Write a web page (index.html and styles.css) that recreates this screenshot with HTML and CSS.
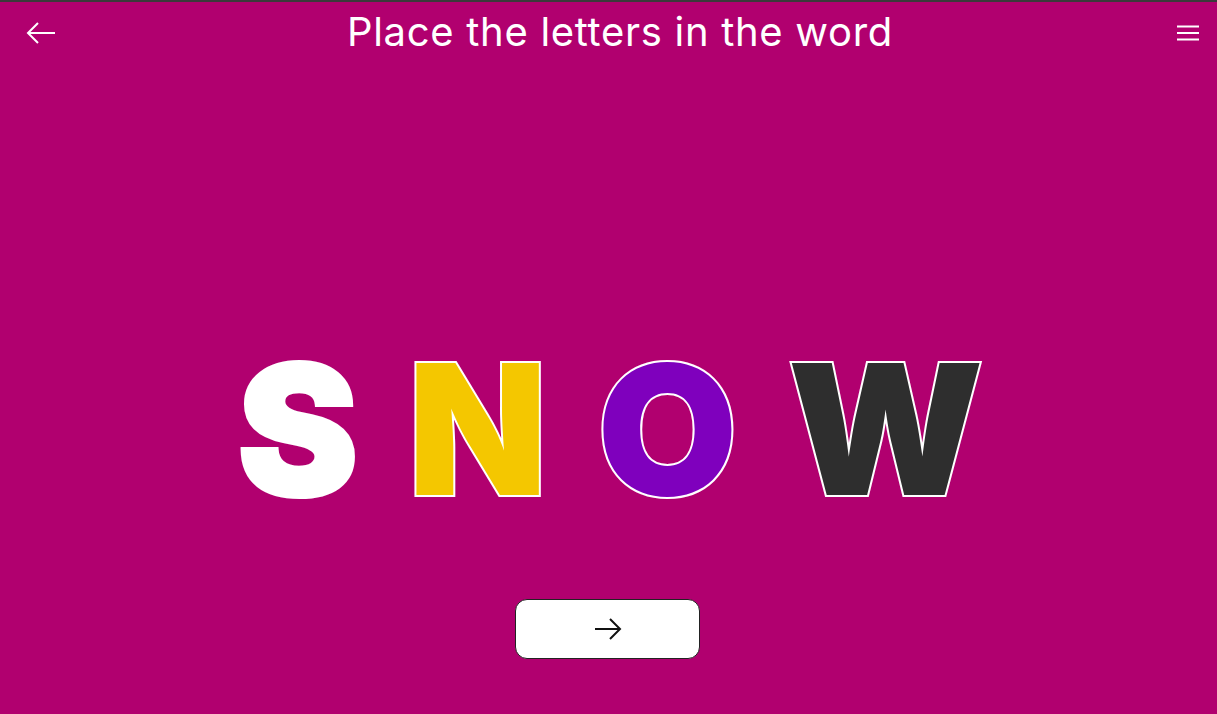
FILE: index.html
```html
<!DOCTYPE html>
<html>
<head>
<meta charset="utf-8">
<link rel="stylesheet" href="styles.css">
</head>
<body>
<div class="app">
  <header class="topbar">
    <button class="icon-btn back" aria-label="Back">
      <svg width="30" height="24" viewBox="0 0 30 24"><path d="M29 12H2M12 2L2 12l10 10" fill="none" stroke="#fff" stroke-width="2"/></svg>
    </button>
    <h1 class="title">Place the letters in the word</h1>
    <button class="icon-btn menu" aria-label="Menu">
      <svg width="24" height="18" viewBox="0 0 24 18"><path d="M1 2.5h22M1 9h22M1 15.5h22" stroke="#fff" stroke-width="2"/></svg>
    </button>
  </header>
  <main class="stage">
    <div class="word">
      <span class="letter l-s">S</span>
      <span class="letter l-n">N</span>
      <span class="letter l-o">O</span>
      <span class="letter l-w">W</span>
    </div>
  </main>
  <footer class="actions">
    <button class="next" aria-label="Next">
      <svg width="30" height="24" viewBox="0 0 30 24"><path d="M2 12h25M17 2l10 10-10 10" fill="none" stroke="#111" stroke-width="2"/></svg>
    </button>
  </footer>
</div>
</body>
</html>
```
FILE: styles.css
```css
* { box-sizing: border-box; }
html, body { margin: 0; height: 100%; }
body {
  background: #b1006f;
  font-family: "Inter", "Noto Sans", sans-serif;
  overflow: hidden;
}
.app {
  height: 714px;
  border-top: 2px solid #3a3a3a;
  display: flex;
  flex-direction: column;
}
.topbar {
  height: 62px;
  display: flex;
  align-items: center;
  justify-content: space-between;
  padding: 0 17px 0 26px;
}
.icon-btn {
  background: none;
  border: 0;
  padding: 0;
  display: flex;
  cursor: pointer;
}
.title {
  margin: 0;
  color: #fff;
  font-weight: 400;
  font-size: 40px;
  letter-spacing: 0.7px;
  flex: 1;
  text-align: center;
  padding-left: 8px;
  position: relative;
  top: -2px;
}
.stage {
  flex: 1;
  display: flex;
  align-items: center;
  justify-content: center;
  padding-top: 196px;
}
.word {
  display: flex;
  gap: 50px;
  align-items: center;
  padding-left: 4px;
}
.letter {
  font-size: 181px;
  font-weight: 900;
  line-height: 1;
  -webkit-text-stroke: 4px #fff;
  paint-order: stroke fill;
}
.l-s { color: #fff; }
.l-n { color: #f4c700; }
.l-o { color: #7f00bd; }
.l-w { color: #2e2e2e; }
.actions {
  height: 115px;
  display: flex;
  justify-content: center;
}
.next {
  width: 185px;
  height: 60px;
  background: #fff;
  border: 1px solid #222;
  border-radius: 12px;
  display: flex;
  align-items: center;
  justify-content: center;
  position: relative;
  left: -1px;
}
```
